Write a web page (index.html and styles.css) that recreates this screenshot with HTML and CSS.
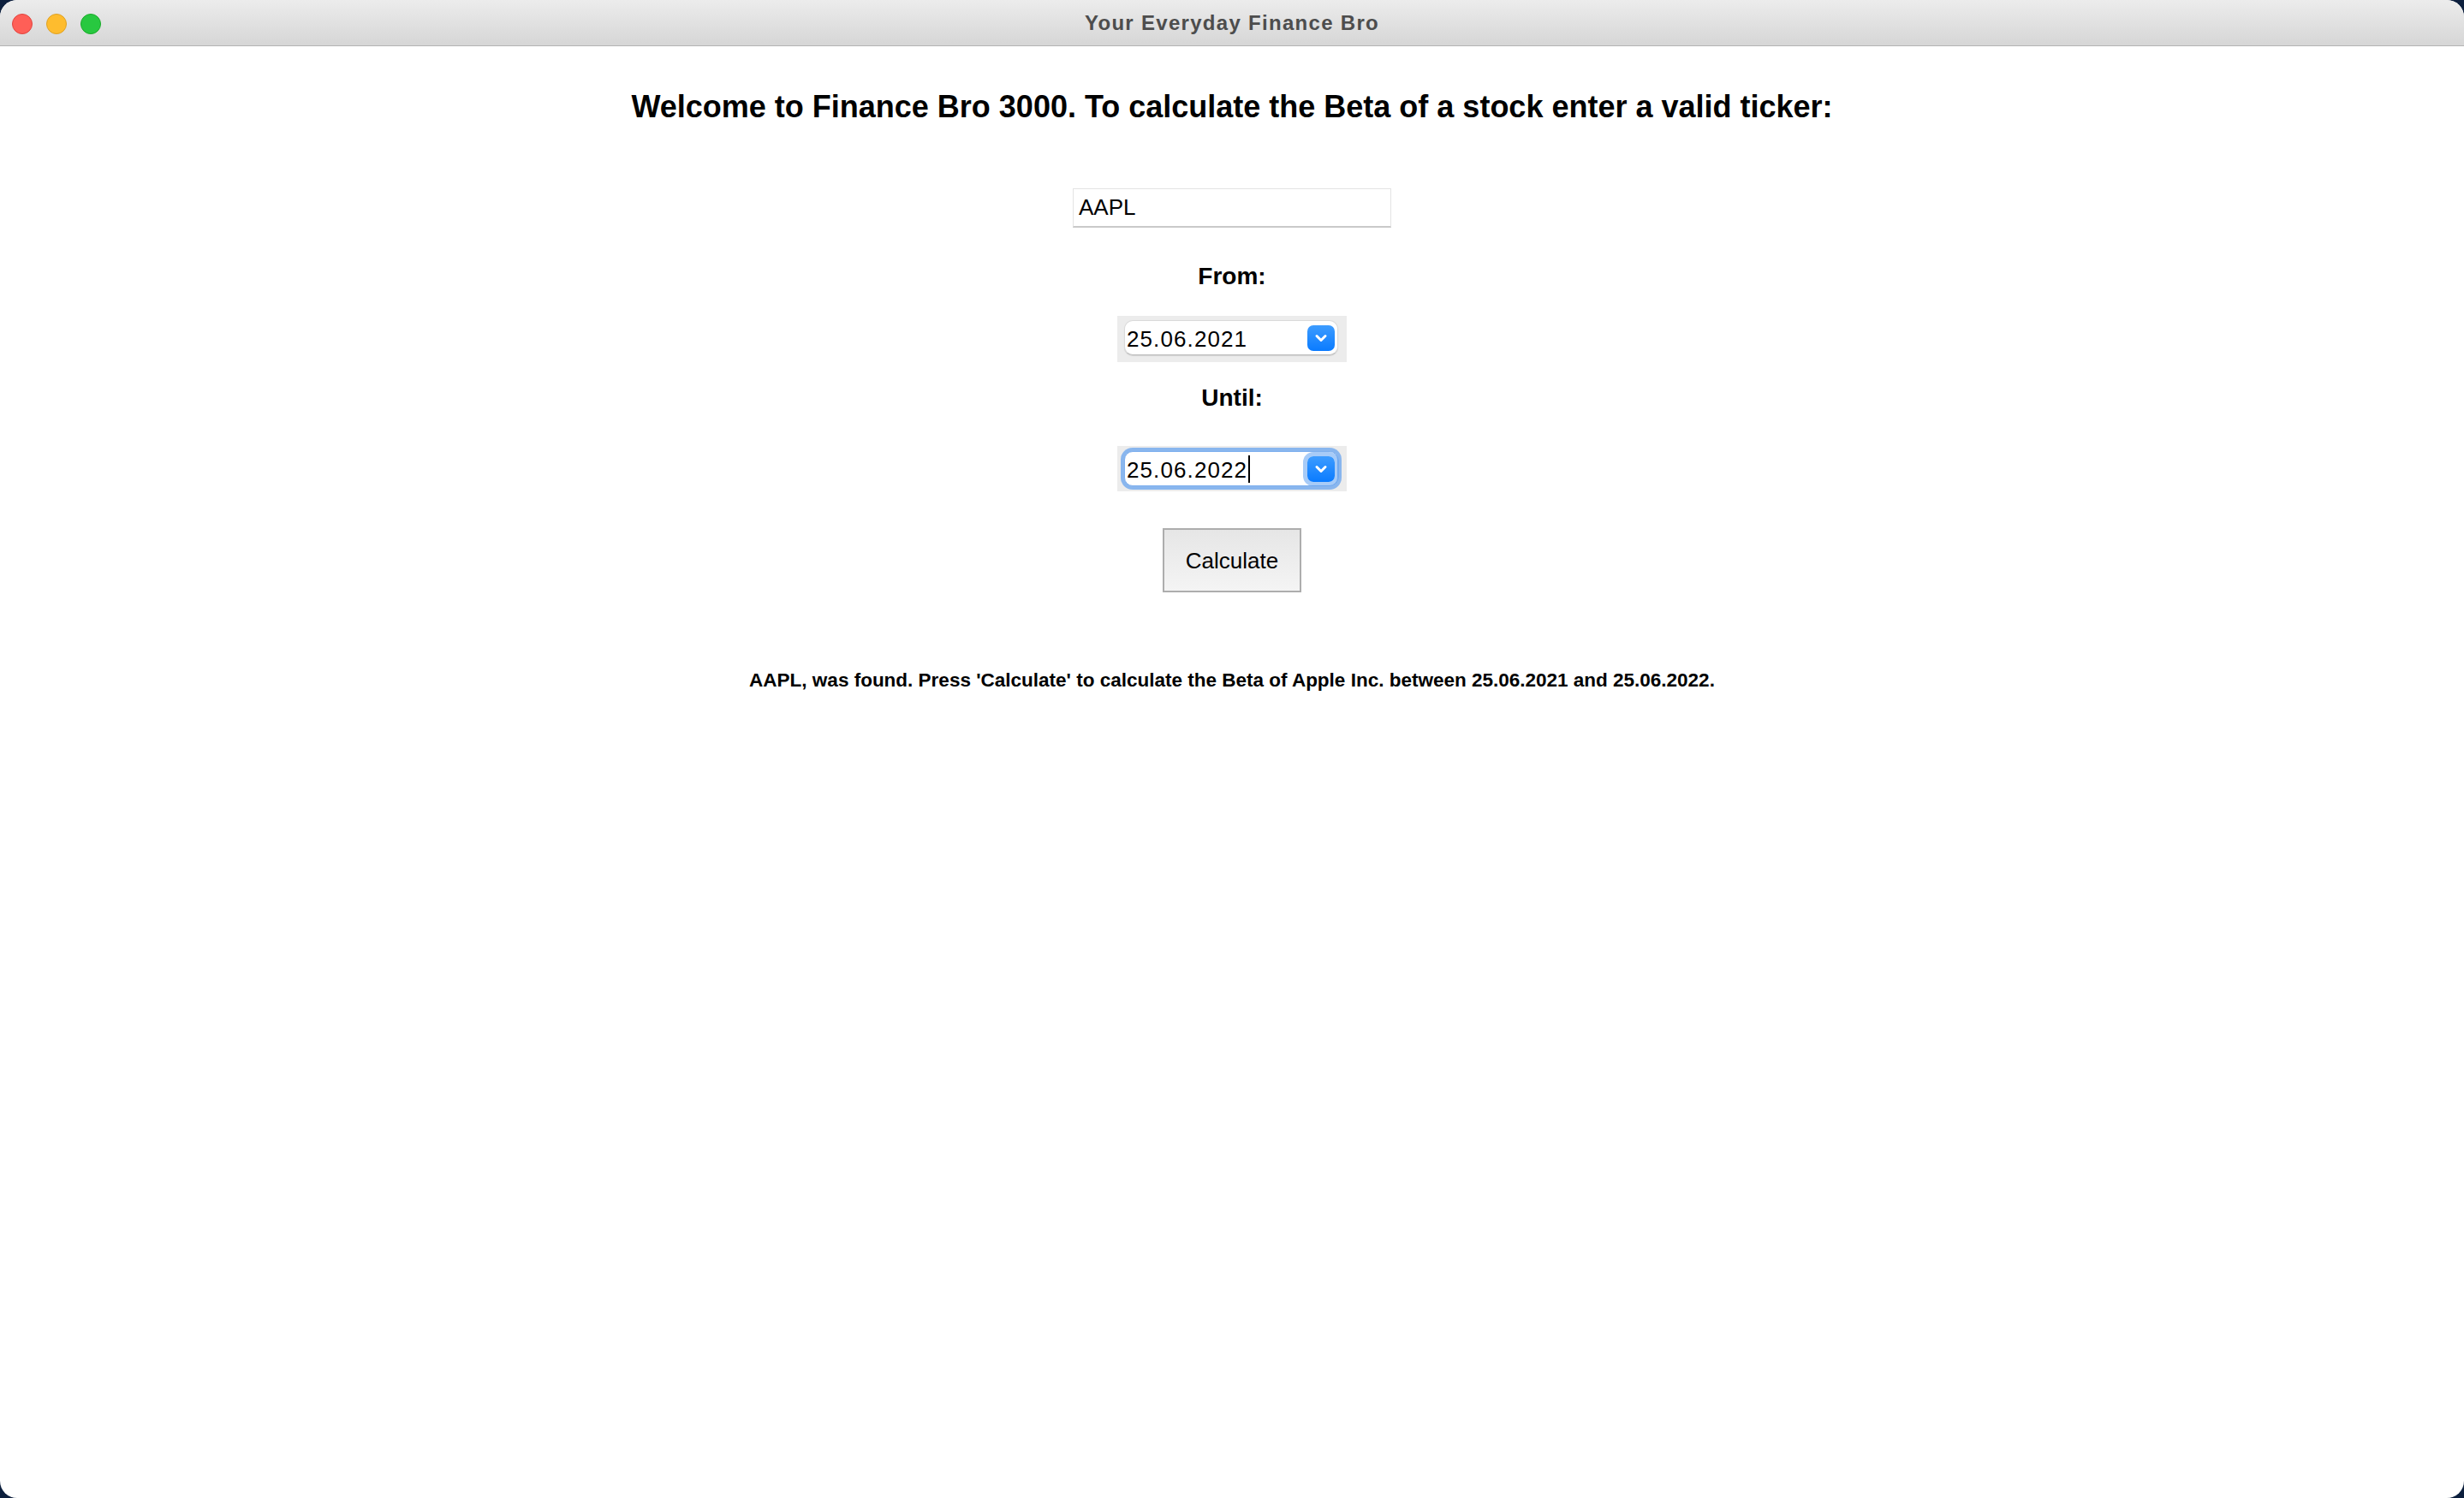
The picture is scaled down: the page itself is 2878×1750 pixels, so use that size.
FILE: index.html
```html
<!DOCTYPE html>
<html lang="en">
<head>
<meta charset="utf-8">
<title>Your Everyday Finance Bro</title>
<link rel="stylesheet" href="styles.css">
</head>
<body>
<div class="window">
  <header class="titlebar">
    <div class="lights">
      <span class="light red"></span>
      <span class="light yellow"></span>
      <span class="light green"></span>
    </div>
    <div class="title">Your Everyday Finance Bro</div>
  </header>
  <main class="content">
    <h1 class="heading">Welcome to Finance Bro 3000. To calculate the Beta of a stock enter a valid ticker:</h1>
    <div class="ticker">AAPL</div>
    <div class="label label-from">From:</div>
    <div class="datewrap datewrap-from">
      <div class="datebox">
        <span class="datetext">25.06.2021</span>
        <span class="drop">
          <svg viewBox="0 0 32 30" width="32" height="30"><path d="M11 12.5 L16 17.5 L21 12.5" fill="none" stroke="#fff" stroke-width="3" stroke-linecap="round" stroke-linejoin="round"/></svg>
        </span>
      </div>
    </div>
    <div class="label label-until">Until:</div>
    <div class="datewrap datewrap-until">
      <div class="datebox focused">
        <span class="datetext">25.06.2022<span class="caret"></span></span>
        <span class="drop drop-focused">
          <svg viewBox="0 0 32 30" width="32" height="30"><path d="M11 12.5 L16 17.5 L21 12.5" fill="none" stroke="#fff" stroke-width="3" stroke-linecap="round" stroke-linejoin="round"/></svg>
        </span>
      </div>
    </div>
    <div class="button">Calculate</div>
    <p class="message">AAPL, was found. Press 'Calculate' to calculate the Beta of Apple Inc. between 25.06.2021 and 25.06.2022.</p>
  </main>
</div>
</body>
</html>
```
FILE: styles.css
```css
html, body {
  margin: 0;
  padding: 0;
  background: #0c1f3d;
}
body {
  width: 2878px;
  height: 1750px;
  overflow: hidden;
  font-family: "Liberation Sans", Arial, sans-serif;
  color: #000;
}
.window {
  width: 2878px;
  height: 1750px;
  background: #fff;
  border-radius: 20px;
  overflow: hidden;
  display: flex;
  flex-direction: column;
}
.titlebar {
  height: 53px;
  flex: 0 0 auto;
  background: linear-gradient(#ececec, #d6d6d6);
  border-bottom: 1px solid #b3b3b3;
  display: flex;
  align-items: center;
  position: relative;
}
.lights {
  display: flex;
  gap: 16px;
  padding-left: 14px;
  padding-top: 2px;
}
.light {
  width: 24px;
  height: 24px;
  border-radius: 50%;
  box-sizing: border-box;
}
.red { background: #ff5f57; border: 1px solid #e0443e; }
.yellow { background: #febc2e; border: 1px solid #dea123; }
.green { background: #28c840; border: 1px solid #1aab29; }
.title {
  position: absolute;
  left: 0;
  right: 0;
  top: 0;
  height: 53px;
  line-height: 54px;
  text-align: center;
  font-weight: bold;
  font-size: 24px;
  letter-spacing: 1.3px;
  color: #4d4d4d;
  pointer-events: none;
}
.content {
  flex: 1 1 auto;
  display: flex;
  flex-direction: column;
  align-items: center;
  padding-top: 49px;
}
.heading {
  margin: 0;
  font-size: 36px;
  line-height: 44px;
  font-weight: bold;
}
.ticker {
  margin-top: 73px;
  width: 372px;
  height: 46px;
  box-sizing: border-box;
  border: 1px solid #e3e3e3;
  border-bottom: 2px solid #c9c9c9;
  padding-left: 6px;
  font-size: 26px;
  line-height: 43px;
  background: #fff;
}
.label {
  font-size: 28px;
  line-height: 34px;
  font-weight: bold;
}
.label-from { margin-top: 40px; }
.label-until { margin-top: 25px; }
.datewrap {
  width: 268px;
  height: 54px;
  box-sizing: border-box;
  background: #ececec;
  padding: 5px 10px 0 8px;
}
.datewrap-from { margin-top: 29px; }
.datewrap-until { margin-top: 39px; height: 53px; padding-top: 6px; }
.datebox {
  height: 41px;
  box-sizing: border-box;
  background: #fff;
  border: 1px solid #dadada;
  border-bottom-color: #bdbdbd;
  border-radius: 10px;
  box-shadow: 0 1px 1px rgba(0,0,0,0.12);
  display: flex;
  align-items: center;
  justify-content: space-between;
  padding: 0 3px 0 2px;
}
.datebox.focused {
  box-shadow: 0 0 0 4px rgba(95, 160, 240, 0.7);
  border-color: #7fb0ee;
}
.datetext {
  font-size: 26px;
  letter-spacing: 1.1px;
  line-height: 30px;
  padding-top: 3px;
  display: flex;
  align-items: center;
}
.caret {
  display: inline-block;
  width: 2px;
  height: 32px;
  background: #000;
  margin-left: 1px;
  margin-top: -2px;
}
.drop {
  width: 32px;
  height: 30px;
  border-radius: 7px;
  background: linear-gradient(#3d9cff, #0a7bff);
  display: flex;
  align-items: center;
  justify-content: center;
}
.drop svg { display: block; }
.drop-focused {
  box-shadow: 0 0 0 5px rgba(95, 160, 240, 0.55);
}
.button {
  margin-top: 43px;
  width: 162px;
  height: 75px;
  box-sizing: border-box;
  border: 2px solid #adadad;
  background: linear-gradient(#e6e6e6, #f4f4f4);
  font-size: 26px;
  display: flex;
  align-items: center;
  justify-content: center;
  padding-top: 1px;
}
.message {
  margin: 90px 0 0 0;
  font-size: 22.5px;
  line-height: 25px;
  font-weight: bold;
}
```
